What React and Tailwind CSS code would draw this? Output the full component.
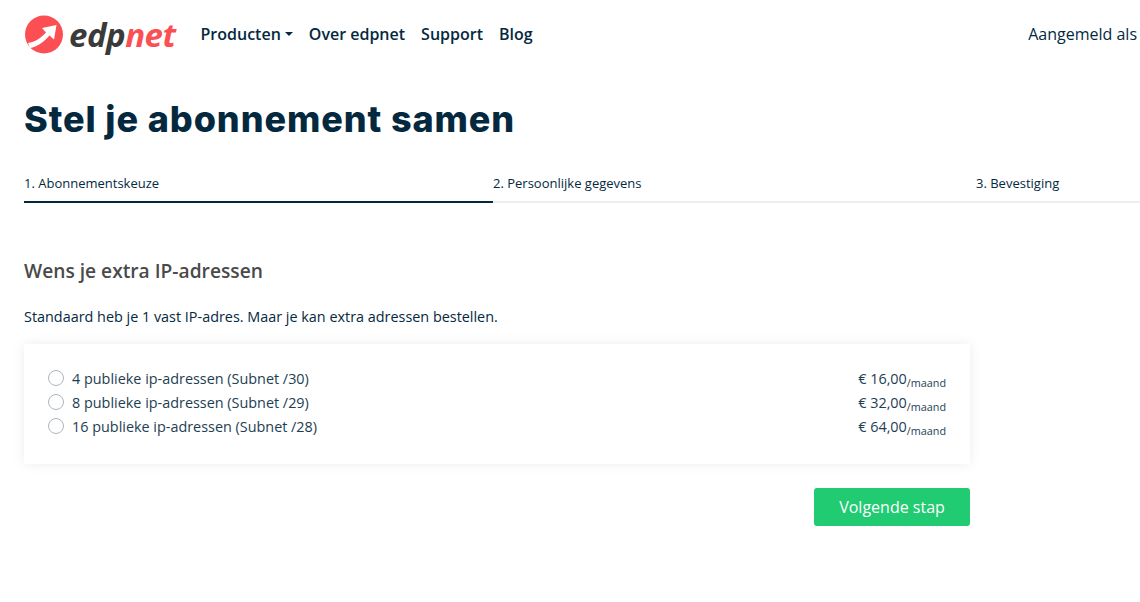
const rows = [
  ["4 publieke ip-adressen (Subnet /30)", "€ 16,00"],
  ["8 publieke ip-adressen (Subnet /29)", "€ 32,00"],
  ["16 publieke ip-adressen (Subnet /28)", "€ 64,00"],
];

function Logo() {
  return (
    <div className="flex items-center ml-[1px]">
      <svg width="38" height="39" viewBox="0 0 38 39" className="shrink-0">
        <circle cx="19" cy="19.5" r="19" fill="#fb4f53" />
        <path d="M3 28 C10 27 16 23 21 17.5 L17 13 L31.5 10 L29 24.5 L24.5 20.5 C19 27 12 32 5 33 Z" fill="#fff" />
      </svg>
      <span className="ml-[6px] text-[33px] leading-none font-bold italic tracking-[-0.5px] [font-family:'Open_Sans',sans-serif]">
        <span className="text-[#3a3a3a]">edp</span>
        <span className="text-[#fb4f53]">net</span>
      </span>
    </div>
  );
}

export default function App() {
  return (
    <div className="w-[1140px] h-[602px] overflow-hidden bg-white text-[#04293f] [font-family:'Open_Sans',sans-serif]">
      <header className="h-[68px] pl-[24px] pr-[3px] flex items-center">
        <Logo />
        <nav className="ml-[25px] flex items-center gap-[16px] text-[16px] font-semibold">
          <span className="flex items-center">
            Producten
            <span className="ml-[4px] w-0 h-0 border-x-[4px] border-x-transparent border-t-[4px] border-t-[#04293f]" />
          </span>
          <span>Over edpnet</span>
          <span>Support</span>
          <span>Blog</span>
        </nav>
        <span className="ml-auto text-[16px]">Aangemeld als</span>
      </header>

      <main className="pl-[24px]">
        <h1 className="mt-[24px] text-[36px] leading-[54px] font-extrabold tracking-[0.9px] text-[#04293f] [font-family:'Inter',sans-serif]">
          Stel je abonnement samen
        </h1>

        <div className="mt-[21px] flex h-[36px] text-[13px] border-b-2 border-[#eceeef]">
          <div className="w-[469px] -mb-[2px] pt-[7px] border-b-2 border-[#04293f]">1. Abonnementskeuze</div>
          <div className="w-[483px] pt-[7px]">2. Persoonlijke gegevens</div>
          <div className="pt-[7px]">3. Bevestiging</div>
        </div>

        <h2 className="mt-[55px] text-[19.2px] leading-[25px] font-semibold text-[#4a4a4a]">Wens je extra IP-adressen</h2>
        <p className="mt-[23px] text-[14.4px] leading-[21px]">
          Standaard heb je 1 vast IP-adres. Maar je kan extra adressen bestellen.
        </p>

        <section className="mt-[17px] w-[946px] h-[120px] px-[24px] py-[23px] bg-white shadow-[0_0_12px_rgba(0,0,0,0.08)]">
          {rows.map(([label, price]) => (
            <div key={label} className="h-[24px] flex items-center text-[14.4px] text-[#1d3e53]">
              <span className="w-[16px] h-[16px] mb-[2px] rounded-full border border-[#adb5bd] bg-white" />
              <span className="ml-[8px]">{label}</span>
              <span className="ml-auto">
                {price}
                <span className="text-[10.8px] relative top-[3px]">/maand</span>
              </span>
            </div>
          ))}
        </section>

        <div className="w-[946px] mt-[24px] flex justify-end">
          <button className="w-[156px] h-[38px] rounded-[3px] bg-[#20cb71] text-white text-[16px]">Volgende stap</button>
        </div>
      </main>
    </div>
  );
}
